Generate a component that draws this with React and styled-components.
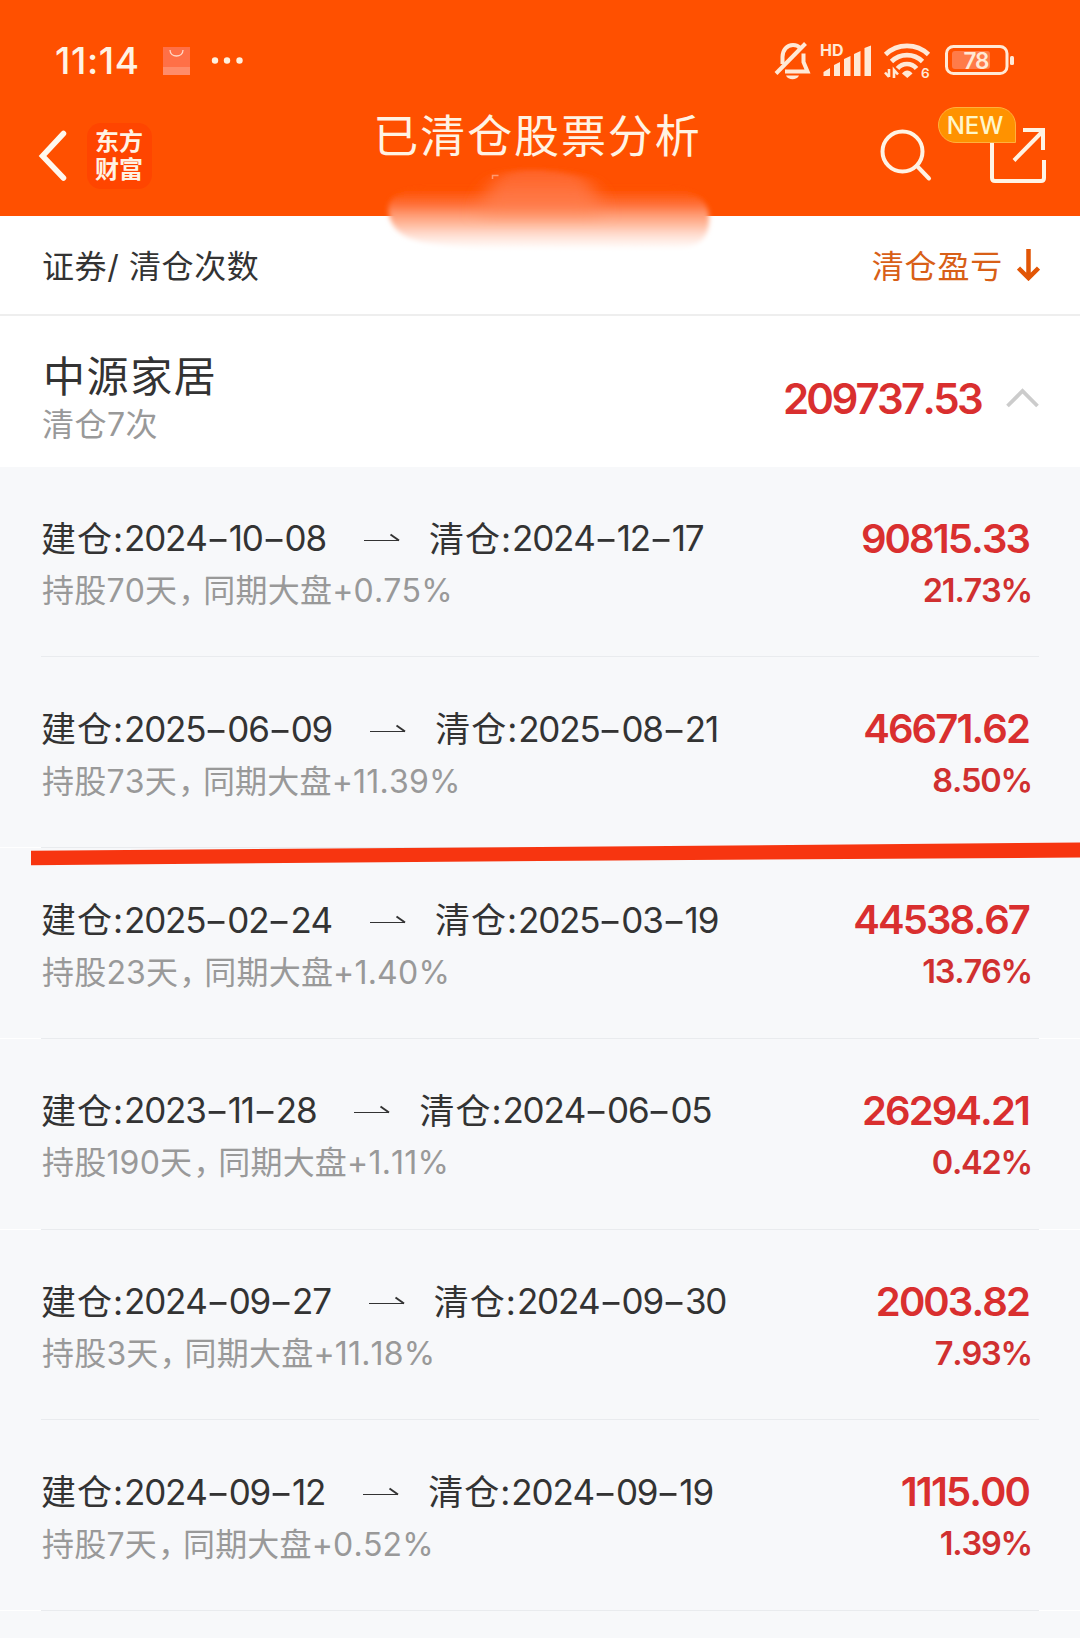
import React from 'react';
import styled, { createGlobalStyle } from 'styled-components';

const texts = {
    title: '已清仓股票分析',
    columnName: '证券/ 清仓次数',
    columnProfit: '清仓盈亏',
    opened: '建仓:',
    closed: '清仓:',
    badge: 'NEW',
};

const stock = {
    name: '中源家居',
    count: '清仓7次',
    profit: '209737.53',
};

const trades = [
    { opened: '2024-10-08', closed: '2024-12-17', days: '持股70天', market: '同期大盘+0.75%', profit: '90815.33', percent: '21.73%' },
    { opened: '2025-06-09', closed: '2025-08-21', days: '持股73天', market: '同期大盘+11.39%', profit: '46671.62', percent: '8.50%', seam: true },
    { opened: '2025-02-24', closed: '2025-03-19', days: '持股23天', market: '同期大盘+1.40%', profit: '44538.67', percent: '13.76%', seam: true },
    { opened: '2023-11-28', closed: '2024-06-05', days: '持股190天', market: '同期大盘+1.11%', profit: '26294.21', percent: '0.42%', seam: true },
    { opened: '2024-09-27', closed: '2024-09-30', days: '持股3天', market: '同期大盘+11.18%', profit: '2003.82', percent: '7.93%' },
    { opened: '2024-09-12', closed: '2024-09-19', days: '持股7天', market: '同期大盘+0.52%', profit: '1115.00', percent: '1.39%', seam: true },
];

const GlobalStyle = createGlobalStyle`
    body {
        margin: 0;
        background: #f7f8fa;
        font-family: Inter, "Noto Sans CJK SC", sans-serif;
        color: #333;
    }
`;

const Page = styled.div`
    position: relative;
    width: 1080px;
    height: 1638px;
    overflow: hidden;
    white-space: nowrap;
`;

const Header = styled.header`
    height: 216px;
    background: #ff5000;
    color: #fff3e4;
`;

const StatusBar = styled.div`
    display: flex;
    justify-content: space-between;
    height: 106px;
    padding: 0 64px 0 55px;
    box-sizing: border-box;
`;

const StatusGroup = styled.div`
    display: flex;
    align-items: center;
    height: 121px;
`;

const Clock = styled.span`
    width: 84px;
    margin-right: 24px;
    font-size: 37px;
    font-weight: 500;
    font-kerning: none;
    letter-spacing: 0.6px;
`;

const Dots = styled.svg`
    margin-left: 21px;
`;

const TitleBar = styled.div`
    display: grid;
    grid-template-columns: 1fr auto 1fr;
    height: 98px;
    padding: 1px 33px 0 38px;
`;

const TitleStart = styled.div`
    display: flex;
    align-items: center;
    gap: 20px;
`;

const TitleEnd = styled.div`
    display: flex;
    justify-content: flex-end;
    align-items: center;
`;

const Title = styled.h1`
    margin: 0;
    padding-right: 10px;
    font-size: 45px;
    font-weight: 400;
    line-height: 60px;
    letter-spacing: 1.9px;
`;

const Logo = styled.div`
    display: flex;
    flex-direction: column;
    align-items: center;
    justify-content: center;
    width: 65px;
    height: 66px;
    padding: 0 1px 1px 0;
    box-sizing: border-box;
    border-radius: 14px;
    background: #ff4500;
    font-size: 24px;
    font-weight: 700;
    line-height: 28px;
`;

const ShareButton = styled.div`
    position: relative;
    display: flex;
    margin-left: 58px;
`;

const Badge = styled.span`
    position: absolute;
    right: 31px;
    bottom: 42px;
    width: 76px;
    height: 34px;
    border: 1px solid #ffb13d;
    border-radius: 18px 18px 0 18px;
    background: #ff9200;
    color: #fff6c9;
    font-size: 24px;
    font-weight: 500;
    line-height: 35px;
    text-align: center;
    text-indent: -4px;
`;

const ColumnBar = styled.div`
    display: flex;
    align-items: center;
    justify-content: space-between;
    height: 98px;
    padding: 0 40px 2px 42px;
    box-sizing: border-box;
    background: #fff;
    font-size: 32px;
    letter-spacing: 0.6px;
`;

const SortColumn = styled.div`
    display: flex;
    align-items: center;
    gap: 14px;
    color: #d85f17;
    letter-spacing: 0.8px;
`;

const StockHeader = styled.section`
    display: flex;
    align-items: center;
    justify-content: space-between;
    height: 152.5px;
    padding: 0 41px 0 42px;
    box-sizing: border-box;
    border-top: 2px solid #eee;
    background: #fff;
`;

const StockName = styled.div`
    padding: 18px 0 0 1px;
    font-size: 42px;
    line-height: 50px;
    letter-spacing: 1.6px;
`;

const StockCount = styled.div`
    color: #999;
    font-size: 32px;
    line-height: 46px;
    letter-spacing: 0.5px;
`;

const StockProfit = styled.div`
    display: flex;
    align-items: center;
    gap: 25px;
    padding-top: 14px;
    color: #d92f2f;
    font-size: 42px;
    font-weight: 600;
    font-kerning: none;
    letter-spacing: -2.7px;
`;

const TradeRow = styled.div`
    display: flex;
    flex-direction: column;
    height: 190.8px;
    box-sizing: border-box;
    padding-top: 45.5px;
    background: #f7f8fa;
`;

const TradeLine = styled.div`
    display: flex;
    align-items: center;
    justify-content: space-between;
    height: 52px;
    padding: 0 51px 0 41px;
`;

const Dates = styled.div`
    display: flex;
    align-items: center;
    font-size: 35px;
`;

const DateLabel = styled.span`
    padding-bottom: 4px;
    letter-spacing: 1px;
`;

const DateValue = styled.span`
    font-kerning: none;
    letter-spacing: -1.2px;
`;

const Dash = styled.span`
    display: inline-block;
    width: 22px;
    text-align: center;
    letter-spacing: 0;
    transform: scaleX(1.5);
`;

const Harpoon = styled.svg`
    margin: 2px 29px 0 38px;
`;

const Holding = styled.div`
    padding: 0 0 4px 1px;
    color: #999;
    font-size: 32px;
    font-kerning: none;
    letter-spacing: 0.2px;
`;

const Comma = styled.span`
    padding-left: 1px;
    letter-spacing: -7px;
`;

const Profit = styled.div`
    color: #d92f2f;
    font-size: 40px;
    font-weight: 600;
    font-kerning: none;
    letter-spacing: -1.9px;
`;

const Percent = styled.div`
    margin-right: -3px;
    color: #d03030;
    font-size: 32.5px;
    font-weight: 600;
    font-kerning: none;
    letter-spacing: -1.2px;
`;

const Separator = styled.div`
    margin-top: auto;
    padding: 0 41px;
    background: ${(props) => (props.$seam ? '#fff' : 'transparent')};

    &::after {
        content: '';
        display: block;
        height: 1px;
        background: #e9ebee;
    }
`;

const Overlay = styled.svg`
    position: absolute;
    left: 0;
    top: ${(props) => props.$top}px;
    pointer-events: none;
`;

const BagIcon = () => (
    <svg width="27" height="28" viewBox="0 0 27 28">
        <rect width="27" height="28" fill="#ff7047" />
        <rect y="20" width="27" height="8" fill="#ff8c6a" />
        <path d="M7 3c0 8 13 8 13 0" fill="none" stroke="#ffd9c9" strokeWidth="1.3" />
    </svg>
);

const DotsIcon = () => (
    <Dots width="32" height="8" viewBox="0 0 32 8" fill="#fff0df">
        <circle cx="4" cy="3.5" r="3.2" />
        <circle cx="16" cy="3.5" r="3.2" />
        <circle cx="28.5" cy="3.5" r="3.2" />
    </Dots>
);

const StatusIcons = () => (
    <svg width="242" height="42" viewBox="774 40 242 42" fill="#ffe9d6">
        <g fill="none" stroke="#ffe9d6" strokeWidth="4">
            <path d="M782.5 64V57c0-7 4.500-12 10.500-12 3 0 5.500 1 7 3" />
            <path d="M776 73.500 805.500 43.500" />
            <path d="M803.500 53.500V62l4 9.500H785" />
        </g>
        <path d="M786 75.500h13c-2 5-11 5-13 0z" />
        <text x="820" y="56" fontSize="16" fontWeight="700">HD</text>
        <path d="M823.500 76v-4l6.500-4v8zM834 76V65l6-3v14zM844 76V59l6.500-3v20zM854 76V54l6.500-3v25zM864.500 76V48l6.500-2.500V76z" />
        <g fill="none" stroke="#ffe9d6" strokeWidth="4.700">
            <path d="M885.500 54.500c12-11.500 31-11.500 43 0" />
            <path d="M891.500 61.500c8.500-8.500 22.500-8.500 31 0" />
            <path d="M897.500 68.500c5-6 14-6 19 0" />
        </g>
        <path d="M902 73.500c3-4 7.500-4 10.500 0l-5.200 4.500z" />
        <path d="M889 69v8M885 72.500l4 4.500M894 78v-8l4 4.500" fill="none" stroke="#ffe9d6" strokeWidth="2.600" />
        <text x="921" y="78" fontSize="13.500" fontWeight="600">6</text>
        <rect x="946.500" y="46.500" width="60.500" height="27" rx="7" fill="none" stroke="#ffe9d6" strokeWidth="3" />
        <rect x="952" y="51" width="38" height="18" rx="3" fill="#ff7b49" />
        <rect x="1010" y="56" width="4" height="9" rx="1.500" />
        <text x="976" y="68.500" fontSize="22.500" fontWeight="600" textAnchor="middle" letterSpacing="-1">78</text>
    </svg>
);

const BackIcon = () => (
    <svg width="29" height="52" viewBox="0 0 29 52">
        <path d="M25.500 3.500 4.500 26l21 22" fill="none" stroke="#fff8ee" strokeWidth="5.500" strokeLinecap="round" />
    </svg>
);

const SearchIcon = () => (
    <svg width="52" height="54" viewBox="0 0 52 54" fill="none" stroke="#fff3e4" strokeWidth="4" strokeLinecap="round">
        <circle cx="22.500" cy="22.500" r="20" />
        <path d="M37 37l12 12.500" />
    </svg>
);

const ShareIcon = () => (
    <svg width="57" height="58" viewBox="0 0 57 58" fill="none" stroke="#fff3e4" strokeWidth="4">
        <path d="M2 14v37q0 3 3 3h46q3 0 3-3V33" />
        <path d="M24 33.500 53 4M33 3h20v20" />
    </svg>
);

const DownIcon = () => (
    <svg width="23" height="33" viewBox="0 0 23 33" fill="none" stroke="#e25606" strokeWidth="4.500">
        <path d="M11.500 1v29M1.500 20l10 10 10-10" />
    </svg>
);

const CollapseIcon = () => (
    <svg width="33" height="20" viewBox="0 0 33 20">
        <path d="M1.500 18 16.500 3l15 15" fill="none" stroke="#ccc" strokeWidth="3.800" />
    </svg>
);

const HarpoonIcon = () => (
    <Harpoon width="36" height="12" viewBox="0 0 36 12" fill="none" stroke="#333">
        <path d="M0 7.500h35" strokeWidth="1.200" />
        <path d="M26.500 1.500l8.500 6" strokeWidth="2" />
    </Harpoon>
);

const TradeDate = ({ value }) => {
    const [year, month, day] = value.split('-');
    return (<DateValue>{year}<Dash>-</Dash>{month}<Dash>-</Dash>{day}</DateValue>);
};

const Trade = ({ trade }) => {
    return (<TradeRow>
        <TradeLine>
            <Dates>
                <DateLabel>{texts.opened}</DateLabel>
                <TradeDate value={trade.opened} />
                <HarpoonIcon />
                <DateLabel>{texts.closed}</DateLabel>
                <TradeDate value={trade.closed} />
            </Dates>
            <Profit>{trade.profit}</Profit>
        </TradeLine>
        <TradeLine>
            <Holding>{trade.days}<Comma>，</Comma>{trade.market}</Holding>
            <Percent>{trade.percent}</Percent>
        </TradeLine>
        <Separator $seam={trade.seam} />
    </TradeRow>);
};

// Smudged brush stroke across the lower edge of the header
const Smudge = () => (
    <Overlay $top={150} width="1080" height="120" viewBox="0 150 1080 120">
        <defs>
            <linearGradient id="smudge" x1="0" y1="190" x2="0" y2="249" gradientUnits="userSpaceOnUse">
                <stop offset="0" stopColor="#ff5000" />
                <stop offset="0.25" stopColor="#ff7038" />
                <stop offset="0.42" stopColor="#ff9a72" />
                <stop offset="0.58" stopColor="#ffb99c" />
                <stop offset="0.75" stopColor="#ffdccf" />
                <stop offset="1" stopColor="#fff" />
            </linearGradient>
            <linearGradient id="smudgeTop" x1="0" y1="168" x2="0" y2="226" gradientUnits="userSpaceOnUse">
                <stop offset="0" stopColor="#ff6022" />
                <stop offset="0.5" stopColor="#ff7643" />
                <stop offset="1" stopColor="#ffa17a" stopOpacity="0" />
            </linearGradient>
            <filter id="soft" x="-10%" y="-20%" width="120%" height="140%">
                <feGaussianBlur stdDeviation="2.500" />
            </filter>
            <filter id="softer" x="-20%" y="-40%" width="140%" height="180%">
                <feGaussianBlur stdDeviation="10 2" />
            </filter>
        </defs>
        <path d="M389 215c-4-18 10-25 40-26h240c28 2 41 12 40 30 0 20-10 28-36 30-60 5-180 3-236-5-30-3-44-12-48-29z" fill="url(#smudge)" filter="url(#soft)" />
        <path d="M480 226c2-26 8-44 22-52 20-8 60-4 80 3 14 6 18 28 18 49z" fill="url(#smudgeTop)" filter="url(#softer)" />
        <path d="M492.500 179v-3.500h6" fill="none" stroke="#ff9a70" strokeWidth="1.500" />
    </Overlay>
);

const RedMark = () => (
    <Overlay $top={830} width="1080" height="50" viewBox="0 830 1080 50">
        <path d="M31 850.700 540 847 1080 842.500V857.500L540 861 31 865.200z" fill="#f73510" />
    </Overlay>
);

const App = () => {
    return (<Page>
        <GlobalStyle />
        <Header>
            <StatusBar>
                <StatusGroup>
                    <Clock>11:14</Clock>
                    <BagIcon />
                    <DotsIcon />
                </StatusGroup>
                <StatusGroup>
                    <StatusIcons />
                </StatusGroup>
            </StatusBar>
            <TitleBar>
                <TitleStart>
                    <BackIcon />
                    <Logo>
                        <span>东方</span>
                        <span>财富</span>
                    </Logo>
                </TitleStart>
                <Title>{texts.title}</Title>
                <TitleEnd>
                    <SearchIcon />
                    <ShareButton>
                        <ShareIcon />
                        <Badge>{texts.badge}</Badge>
                    </ShareButton>
                </TitleEnd>
            </TitleBar>
        </Header>
        <ColumnBar>
            <span>{texts.columnName}</span>
            <SortColumn>
                {texts.columnProfit}
                <DownIcon />
            </SortColumn>
        </ColumnBar>
        <StockHeader>
            <div>
                <StockName>{stock.name}</StockName>
                <StockCount>{stock.count}</StockCount>
            </div>
            <StockProfit>
                {stock.profit}
                <CollapseIcon />
            </StockProfit>
        </StockHeader>
        {trades.map((trade) => {
            return <Trade key={trade.opened} trade={trade} />;
        })}
        <Smudge />
        <RedMark />
    </Page>);
};

export default App;
